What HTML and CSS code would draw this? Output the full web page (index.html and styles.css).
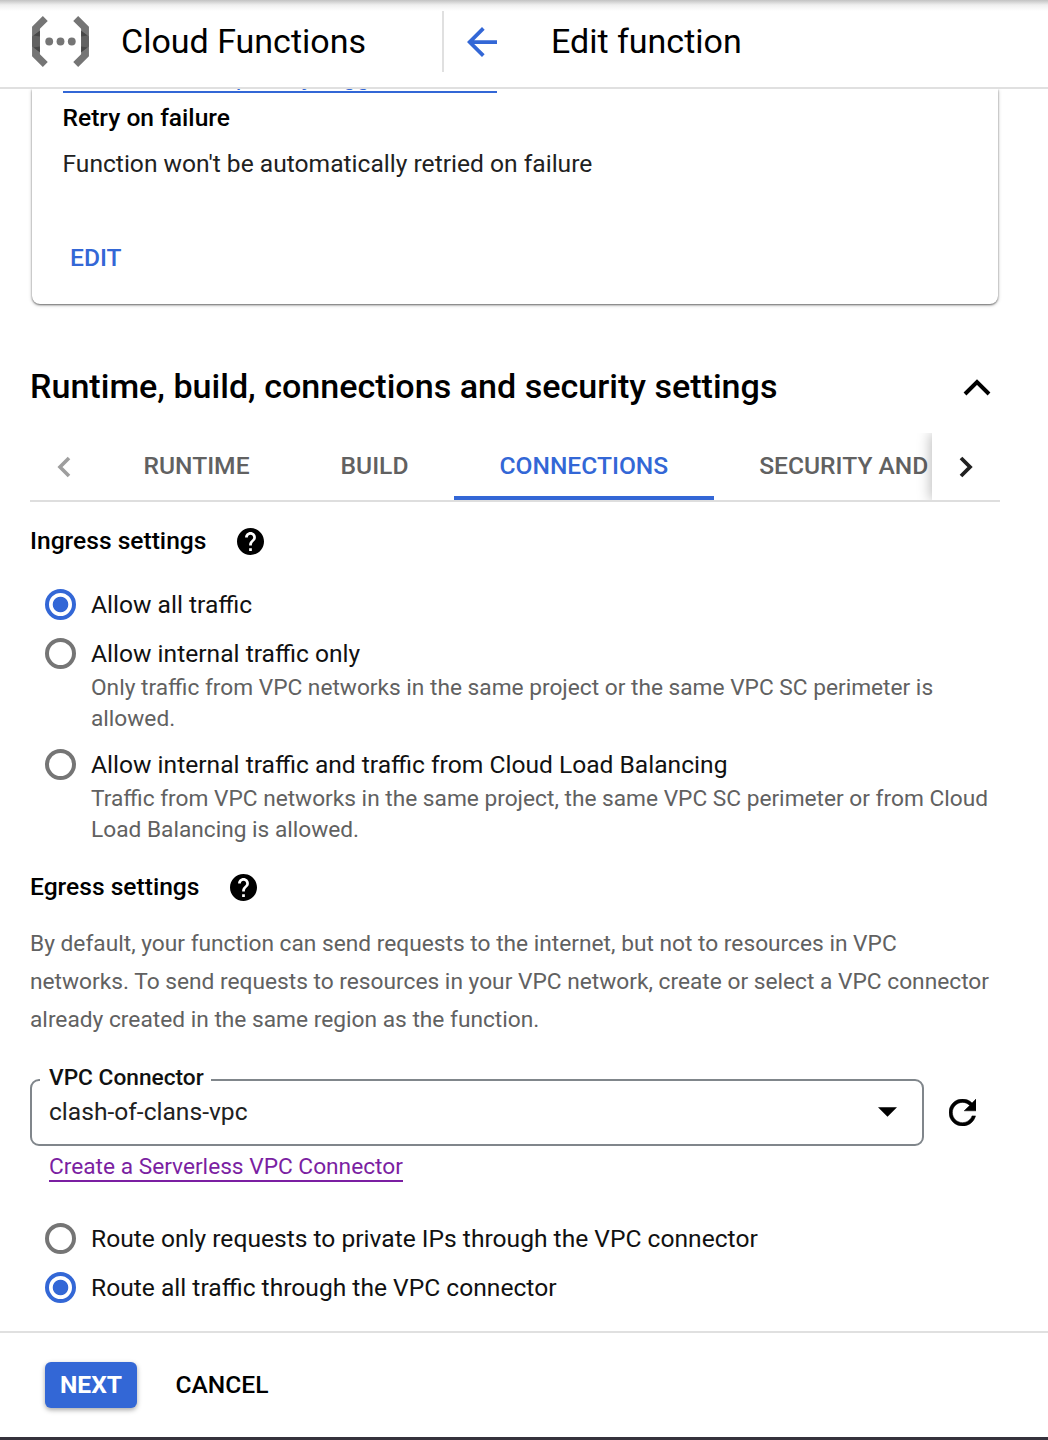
FILE: index.html
```html
<!DOCTYPE html>
<html lang="en">
<head>
<meta charset="utf-8">
<title>Edit function – Cloud Functions</title>
<link rel="stylesheet" href="styles.css">
</head>
<body>
<div class="app">
  <header class="header">
    <svg class="logo" width="57" height="51" viewBox="0 0 58 52">
      <path fill="#757575" d="M11 0 16 5 8 13V39L16 47 11 52 0 41V11ZM47 0 42 5 50 13V39L42 47 47 52 58 41V11Z"/>
      <path fill="#616161" d="M8 15V37L0 31V21ZM50 15V37L58 31V21Z"/>
      <path fill="#484848" d="M8 15V21L1.500 20ZM8 37V31L1.500 32ZM50 15V21L56.500 20ZM50 37V31L56.500 32Z"/>
      <circle cx="17.500" cy="26" r="4" fill="#757575"/><circle cx="29" cy="26" r="4" fill="#757575"/><circle cx="40.500" cy="26" r="4" fill="#757575"/>
    </svg>
    <div class="product">Cloud Functions</div>
    <svg class="back" width="30" height="30" viewBox="4 4 16 16"><path fill="#3367d6" d="M20 11H7.830l5.590-5.590L12 4l-8 8 8 8 1.410-1.410L7.830 13H20v-2z"/></svg>
    <h1 class="page-title">Edit function</h1>
  </header>

  <main class="content">
    <section class="card">
      <a class="topic">clash-of-clans-api-daily-trigger-function</a>
      <h3 class="card-title">Retry on failure</h3>
      <p class="card-text">Function won't be automatically retried on failure</p>
      <button class="edit">EDIT</button>
    </section>

    <div class="section-head">
      <h2 class="section-title">Runtime, build, connections and security settings</h2>
      <svg width="28" height="18" viewBox="0 0 28 18"><path fill="none" stroke="#000" stroke-width="4" d="M2 16 14 4 26 16"/></svg>
    </div>

    <nav class="tabs">
      <div class="pager"><svg width="14" height="22" viewBox="0 0 14 22"><path fill="none" stroke="#9e9e9e" stroke-width="3.600" d="M12 2 3 11 12 20"/></svg></div>
      <div class="tab-list">
        <div class="tab">RUNTIME</div>
        <div class="tab">BUILD</div>
        <div class="tab tab-active">CONNECTIONS</div>
        <div class="tab tab-last">SECURITY AND</div>
      </div>
      <div class="pager pager-next"><svg width="14" height="22" viewBox="0 0 14 22"><path fill="none" stroke="#212121" stroke-width="3.800" d="M2 2 11 11 2 20"/></svg></div>
    </nav>

    <div class="group-head">
      <h3 class="group-title">Ingress settings</h3>
      <svg class="help" width="27" height="27" viewBox="2 2 20 20"><path d="M12 2C6.480 2 2 6.480 2 12s4.480 10 10 10 10-4.480 10-10S17.520 2 12 2zm1 17h-2v-2h2v2zm2.070-7.750l-.9.920C13.450 12.900 13 13.500 13 15h-2v-.5c0-1.100.45-2.100 1.170-2.830l1.240-1.260c.37-.36.59-.86.59-1.410 0-1.100-.9-2-2-2s-2 .9-2 2H8c0-2.210 1.790-4 4-4s4 1.790 4 4c0 .88-.36 1.680-.93 2.250z"/></svg>
    </div>
    <div class="radio-group ingress">
      <div class="option"><span class="radio radio-on"></span><div><div class="label">Allow all traffic</div></div></div>
      <div class="option"><span class="radio"></span><div><div class="label">Allow internal traffic only</div><div class="hint">Only traffic from VPC networks in the same project or the same VPC SC perimeter is<br>allowed.</div></div></div>
      <div class="option"><span class="radio"></span><div><div class="label">Allow internal traffic and traffic from Cloud Load Balancing</div><div class="hint">Traffic from VPC networks in the same project, the same VPC SC perimeter or from Cloud<br>Load Balancing is allowed.</div></div></div>
    </div>

    <div class="group-head group-egress">
      <h3 class="group-title">Egress settings</h3>
      <svg class="help" width="27" height="27" viewBox="2 2 20 20"><path d="M12 2C6.480 2 2 6.480 2 12s4.480 10 10 10 10-4.480 10-10S17.520 2 12 2zm1 17h-2v-2h2v2zm2.070-7.750l-.9.920C13.450 12.900 13 13.500 13 15h-2v-.5c0-1.100.45-2.100 1.170-2.830l1.240-1.260c.37-.36.59-.86.59-1.410 0-1.100-.9-2-2-2s-2 .9-2 2H8c0-2.210 1.790-4 4-4s4 1.790 4 4c0 .88-.36 1.680-.93 2.250z"/></svg>
    </div>
    <p class="description">By default, your function can send requests to the internet, but not to resources in VPC<br>networks. To send requests to resources in your VPC network, create or select a VPC connector<br>already created in the same region as the function.</p>

    <div class="connector">
      <div class="select">
        <span class="select-label">VPC Connector</span>
        <span class="select-value">clash-of-clans-vpc</span>
        <svg width="19" height="10" viewBox="0 0 20 10"><path d="M0 0H20L10 10Z"/></svg>
      </div>
      <svg class="refresh" width="27" height="27" viewBox="4 4 16 16"><path d="M17.650 6.350C16.200 4.900 14.210 4 12 4c-4.420 0-7.990 3.580-7.990 8s3.570 8 7.990 8c3.730 0 6.840-2.550 7.730-6h-2.080c-.82 2.330-3.040 4-5.650 4-3.310 0-6-2.690-6-6s2.690-6 6-6c1.660 0 3.140.69 4.220 1.780L13 11h7V4l-2.350 2.350z" stroke="#000" stroke-width=".3"/></svg>
    </div>
    <a class="create-link">Create a Serverless VPC Connector</a>

    <div class="radio-group egress">
      <div class="option"><span class="radio"></span><div class="label">Route only requests to private IPs through the VPC connector</div></div>
      <div class="option"><span class="radio radio-on"></span><div class="label">Route all traffic through the VPC connector</div></div>
    </div>
  </main>

  <footer class="footer">
    <button class="next">NEXT</button>
    <button class="cancel">CANCEL</button>
  </footer>
</div>
</body>
</html>
```
FILE: styles.css
```css
* { box-sizing: border-box; }
body { margin: 0; background: #fff; color: #000; font-family: Roboto, sans-serif; font-size: 24.6px; }
h1, h2, h3, p { margin: 0; }
button { border: 0; background: none; padding: 0; font: 500 24.6px/46px Roboto, sans-serif; color: #000; }
svg { display: block; flex: none; }

.app { display: flex; flex-direction: column; height: 1440px; overflow: hidden; border-bottom: 3px solid #35323c; }

.header { display: flex; align-items: center; flex: none; height: 89px; padding: 0 0 4px 32px; border-bottom: 2px solid #e0e0e0; background: linear-gradient(#c2c2c2, #efefef 5px, #fff 11px); }
.product { width: 323px; height: 61px; margin-left: 32px; border-right: 2px solid #e0e0e0; font-size: 34px; line-height: 61px; white-space: nowrap; }
.back { margin-left: 23px; }
.page-title { margin: 0 0 2px 54px; font-size: 34px; font-weight: 400; }

.content { flex: 1; min-height: 0; padding: 0 48px 0 30px; overflow: hidden; }

.card { height: 215px; margin: 0 2px; padding-left: 30.500px; border-radius: 0 0 8px 8px; box-shadow: 0 1px 2px rgba(0,0,0,.5), 0 1px 4px rgba(0,0,0,.2); overflow: clip; }
.topic { display: flex; align-items: flex-end; width: 434px; height: 4px; border-bottom: 2px solid #3367d6; color: #3367d6; line-height: 28px; white-space: nowrap; overflow: hidden; }
.card-title { margin-top: 9px; font-size: 24.6px; font-weight: 500; line-height: 32px; }
.card-text { margin-top: 14px; line-height: 32px; color: #212121; }
.edit { display: block; margin: 55px 0 0 7.500px; color: #3367d6; }

.section-head { display: flex; align-items: center; justify-content: space-between; margin-top: 62px; padding-right: 9px; }
.section-title { margin-bottom: 2px; font-size: 34.100px; font-weight: 500; line-height: 40px; white-space: nowrap; }

.tabs { display: flex; height: 69px; margin-top: 25px; border-bottom: 2px solid #dedede; }
.pager { display: flex; flex: none; align-items: center; justify-content: center; width: 68px; }
.pager-next { box-shadow: -2px 0 12px rgba(0,0,0,.25); clip-path: inset(0 0 0 -30px); background: #fff; }
.tab-list { display: flex; flex: 1; min-width: 0; overflow: hidden; }
.tab { flex: none; padding: 0 45.500px; font-weight: 500; line-height: 66px; color: #616161; white-space: nowrap; }
.tab-last { padding-right: 0; }
.tab-active { color: #3367d6; border-bottom: 4px solid #3367d6; }

.group-head { display: flex; align-items: center; gap: 31px; height: 32px; margin-top: 23px; }
.group-title { font-size: 24.6px; font-weight: 500; line-height: 32px; }
.group-egress { margin-top: 28px; }

.radio-group { display: flex; flex-direction: column; gap: 17px; padding-left: 15px; }
.ingress { margin-top: 32px; }
.option { display: flex; gap: 15px; }
.radio { flex: none; width: 31px; height: 31px; border: 4px solid #757575; border-radius: 50%; }
.radio-on { border-color: #3367d6; background: radial-gradient(circle, #3367d6 7.300px, #fff 8.200px); }
.label { line-height: 32px; color: #111; white-space: nowrap; }
.hint { margin: 3px 0 -2px; font-size: 22.700px; line-height: 30.500px; color: #616161; white-space: nowrap; }

.description { margin-top: 22px; font-size: 22.720px; line-height: 37.800px; color: #616161; white-space: nowrap; }

.connector { display: flex; align-items: center; gap: 25px; margin-top: 41px; }
.select { position: relative; display: flex; align-items: center; justify-content: space-between; width: 894px; height: 67px; padding: 0 25px 2px 17px; border: 2px solid #80868b; border-radius: 9px; color: #212121; }
.select-label { position: absolute; left: 8px; top: -17px; padding: 0 7px 0 9px; background: #fff; color: #111; font-size: 22.700px; font-weight: 500; line-height: 28px; }
.create-link { display: block; width: fit-content; margin: 8px 0 0 19px; border-bottom: 2px solid #7b1fa2; font-size: 22.700px; line-height: 26px; color: #7b1fa2; }
.egress { margin-top: 41px; }

.footer { display: flex; flex: none; gap: 38.500px; height: 106px; padding: 29px 45px; border-top: 2px solid #e0e0e0; }
.next { width: 92px; height: 46px; border-radius: 6px; background: #3367d6; color: #fff; font-weight: 700; box-shadow: 0 2px 5px rgba(0,0,0,.35); }
```
